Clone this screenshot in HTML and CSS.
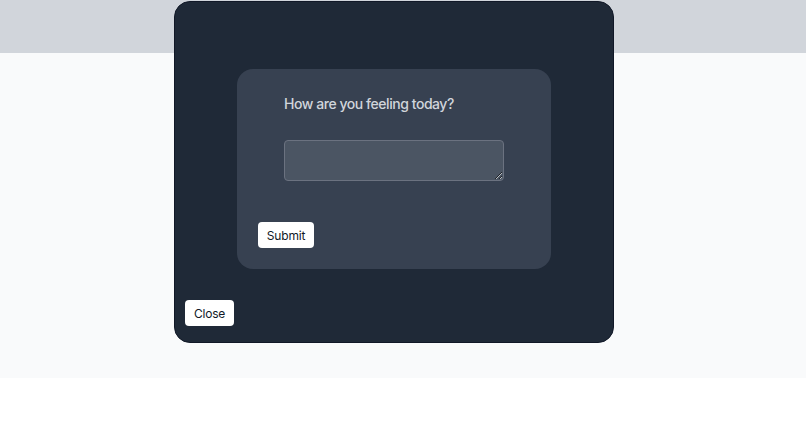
FILE: index.html
```html
<!DOCTYPE html>
<html>
<head>
<meta charset="utf-8">
<link rel="stylesheet" href="styles.css">
</head>
<body>
<header class="topbar"></header>
<main class="page"></main>
<div class="modal">
  <div class="card">
    <div class="group">
      <h2 class="question">How are you feeling today?</h2>
      <textarea class="answer"></textarea>
    </div>
    <button class="btn submit">Submit</button>
  </div>
  <button class="btn close">Close</button>
</div>
</body>
</html>
```
FILE: styles.css
```css
html, body {
  margin: 0;
  padding: 0;
  background: #ffffff;
  font-family: Inter, "Noto Sans", sans-serif;
}
.topbar {
  height: 53px;
  background: #d1d5db;
}
.page {
  height: 325px;
  background: #f9fafb;
}
.modal {
  position: absolute;
  left: 174px;
  top: 1px;
  width: 438px;
  height: 340px;
  background: #1f2937;
  border: 1px solid #111827;
  border-radius: 16px;
  display: flex;
  flex-direction: column;
  align-items: flex-start;
}
.card {
  margin: 67px 0 0 62px;
  width: 272px;
  padding: 21px;
  background: #374151;
  border-radius: 16px;
  display: flex;
  flex-direction: column;
  align-items: flex-start;
}
.group {
  padding: 0 26px;
  display: flex;
  flex-direction: column;
  align-items: flex-start;
}
.question {
  margin: 0;
  font-size: 14px;
  line-height: 28px;
  font-weight: 500;
  letter-spacing: -0.45px;
  color: #d1d5db;
}
.answer {
  margin: 22px 0 0 0;
  box-sizing: border-box;
  width: 220px;
  height: 41px;
  background: #4b5563;
  border: 1px solid #6b7280;
  border-radius: 4px;
  color: #e5e7eb;
  display: block;
}
.btn {
  box-sizing: border-box;
  height: 26px;
  padding: 0;
  background: #ffffff;
  border: none;
  border-radius: 4px;
  font-family: Inter, "Noto Sans", sans-serif;
  font-size: 12px;
  letter-spacing: -0.2px;
  color: #111827;
}
.submit {
  margin-top: 41px;
  width: 56px;
}
.close {
  margin: 31px 0 0 10px;
  width: 49px;
}
```
